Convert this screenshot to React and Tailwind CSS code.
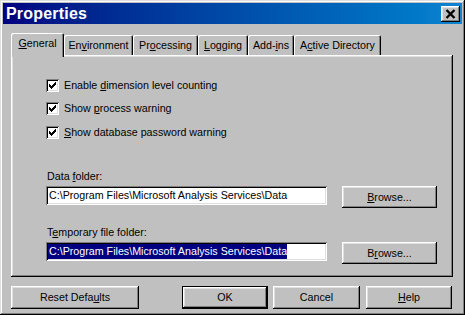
import React from "react";

const raised =
  "shadow-[inset_-1px_-1px_#000,inset_1px_1px_#fff,inset_-2px_-2px_#808080,inset_2px_2px_#dfdfdf]";
const sunken =
  "shadow-[inset_1px_1px_#808080,inset_-1px_-1px_#fff,inset_2px_2px_#000,inset_-2px_-2px_#dfdfdf]";

function CheckBox() {
  return (
    <div className={`w-[13px] h-[13px] bg-white ${sunken} shrink-0`}>
      <svg width="13" height="13" viewBox="0 0 13 13" shapeRendering="crispEdges">
        <path
          fill="#000"
          d="M9 3h1v1h-1z M8 4h2v1h-2z M3 5h1v1h-1z M7 5h3v1h-3z M3 6h2v1h-2z M6 6h3v1h-3z M3 7h5v1h-5z M4 8h3v1h-3z M5 9h1v1h-1z"
        />
      </svg>
    </div>
  );
}

function CheckRow({ className = "", children }) {
  return (
    <div className={`flex items-center h-[13px] ${className}`}>
      <CheckBox />
      <span className="ml-[5px] leading-[13px]">{children}</span>
    </div>
  );
}

function Tab({ w, children, selected }) {
  if (selected) {
    return (
      <div
        className={`${w} h-[24px] -mb-[2px] bg-[#c0c0c0] rounded-t-[2px] shadow-[inset_1px_1px_#fff,inset_-1px_0_#000,inset_-2px_0_#808080] flex justify-center pt-[4px] leading-[13px]`}
      >
        {children}
      </div>
    );
  }
  return (
    <div
      className={`${w} h-[20px] bg-[#c0c0c0] rounded-t-[2px] shadow-[inset_1px_1px_#fff,inset_-1px_0_#000,inset_-2px_0_#808080] flex items-center justify-center leading-[13px]`}
    >
      {children}
    </div>
  );
}

function Button({ className = "", children, isDefault }) {
  const sh = isDefault
    ? "shadow-[inset_0_0_0_1px_#000,inset_-2px_-2px_#000,inset_2px_2px_#fff,inset_-3px_-3px_#808080,inset_3px_3px_#dfdfdf]"
    : raised;
  return (
    <div className={`bg-[#c0c0c0] ${sh} flex items-center justify-center leading-[13px] ${className}`}>
      {children}
    </div>
  );
}

const PATH = "C:\\Program Files\\Microsoft Analysis Services\\Data";

export default function App() {
  return (
    <div
      className="w-[465px] h-[315px] bg-[#c0c0c0] p-[3px] flex flex-col text-[10.7px] text-black shadow-[inset_-1px_-1px_#000,inset_1px_1px_#dfdfdf,inset_-2px_-2px_#808080,inset_2px_2px_#fff] overflow-hidden"
      style={{ fontFamily: '"Liberation Sans", Arial, sans-serif' }}
    >
      {/* Title bar */}
      <div className="h-[21px] bg-gradient-to-r from-[#000080] to-[#1084d0] flex items-center justify-between pl-[3px] pr-[2px]">
        <span className="text-white font-bold text-[16px] leading-[21px] tracking-[0.2px]">Properties</span>
        <div className={`w-[19px] h-[16px] bg-[#c0c0c0] ${raised} flex items-center justify-center`}>
          <svg width="11" height="10" viewBox="0 0 11 10">
            <path d="M1.5 1 L9.5 9 M9.5 1 L1.5 9" stroke="#000" strokeWidth="2.4" fill="none" />
          </svg>
        </div>
      </div>

      {/* Tabs + panel */}
      <div className="mt-[9px] pl-[8px] pr-[9px] flex flex-col">
        <div className="relative z-10 h-[22px] flex items-end">
          <Tab w="w-[53px]" selected>
            <span><u>G</u>eneral</span>
          </Tab>
          <Tab w="w-[69px]">
            <span>En<u>v</u>ironment</span>
          </Tab>
          <Tab w="w-[65px]">
            <span>Pr<u>o</u>cessing</span>
          </Tab>
          <Tab w="w-[50px]">
            <span><u>L</u>ogging</span>
          </Tab>
          <Tab w="w-[46px]">
            <span>Add-<u>i</u>ns</span>
          </Tab>
          <Tab w="w-[87px]">
            <span>A<u>c</u>tive Directory</span>
          </Tab>
        </div>

        <div className={`h-[222px] bg-[#c0c0c0] ${raised} pl-[35px] pt-[24px] flex flex-col`}>
          <CheckRow>
            Enable <u>d</u>imension level counting
          </CheckRow>
          <CheckRow className="mt-[10px]">
            Show <u>p</u>rocess warning
          </CheckRow>
          <CheckRow className="mt-[11px]">
            <u>S</u>how database password warning
          </CheckRow>

          <div className="mt-[31px] h-[13px] leading-[13px] pl-[1px]">
            Data <u>f</u>older:
          </div>
          <div className="mt-[3px] flex items-start">
            <div className={`w-[281px] h-[19px] bg-white ${sunken} flex items-center pl-[3px] overflow-hidden whitespace-nowrap leading-[13px]`}>
              {PATH}
            </div>
            <Button className="ml-[15px] w-[95px] h-[22px]">
              <span><u>B</u>rowse...</span>
            </Button>
          </div>

          <div className="mt-[18px] h-[13px] leading-[13px] pl-[1px]">
            T<u>e</u>mporary file folder:
          </div>
          <div className="mt-[3px] flex items-start">
            <div className={`w-[281px] h-[19px] bg-white ${sunken} flex items-center pl-[2px] overflow-hidden whitespace-nowrap`}>
              <span className="bg-[#000080] text-white leading-[15px] pl-[1px]">{PATH}</span>
            </div>
            <Button className="ml-[15px] w-[95px] h-[22px]">
              <span>B<u>r</u>owse...</span>
            </Button>
          </div>
        </div>

        {/* Bottom buttons */}
        <div className="mt-[9px] flex">
          <Button className="w-[128px] h-[23px]">
            <span>Reset Defa<u>u</u>lts</span>
          </Button>
          <Button className="ml-[43px] w-[86px] h-[23px]" isDefault>
            <span>OK</span>
          </Button>
          <Button className="ml-[5px] w-[87px] h-[23px]">
            <span>Cancel</span>
          </Button>
          <Button className="ml-[6px] w-[86px] h-[23px]">
            <span><u>H</u>elp</span>
          </Button>
        </div>
      </div>
    </div>
  );
}
